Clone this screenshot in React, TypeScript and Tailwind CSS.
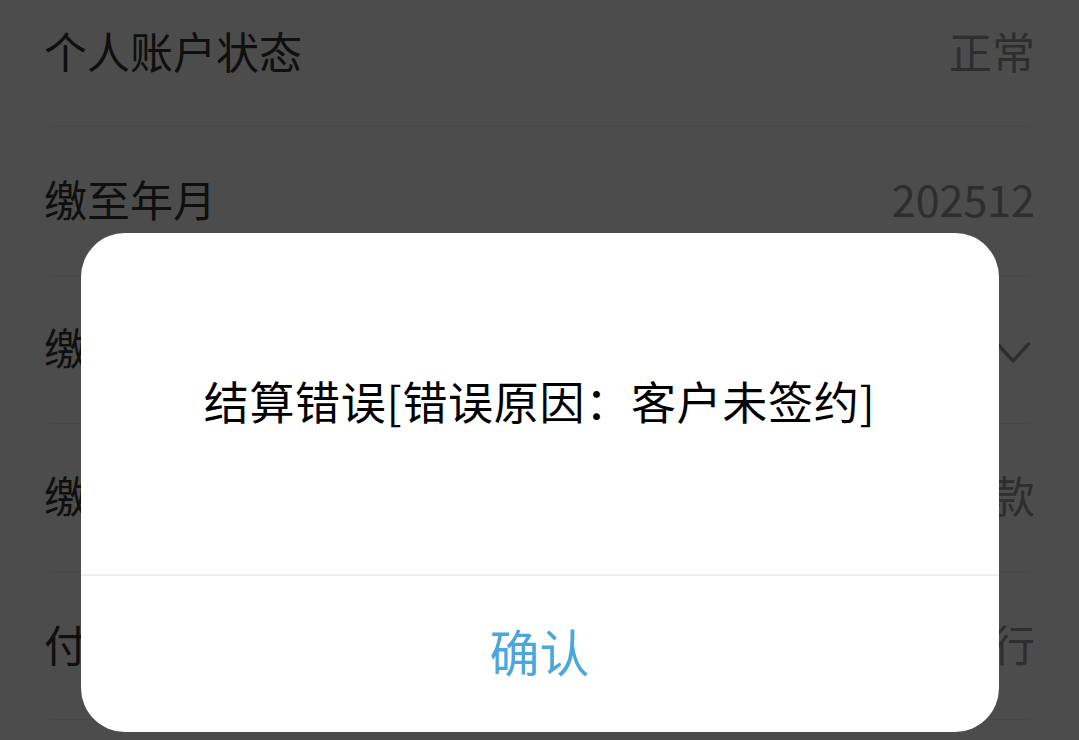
import React from "react";

const font = { fontFamily: '"Noto Sans CJK SC", "Noto Sans", sans-serif' };

type Row = { label: string; value?: string; chevron?: boolean };

const rows: Row[] = [
  { label: "个人账户状态", value: "正常" },
  { label: "缴至年月", value: "202512" },
  { label: "缴费档次", chevron: true },
  { label: "缴费方式", value: "银行代扣款" },
  { label: "付款银行", value: "中国工商银行" },
];

export default function App() {
  return (
    <div className="relative h-[740px] w-[1079px] overflow-hidden bg-white" style={font}>
      <div className="mt-[-21px] flex flex-col">
        {rows.map((r, i) => (
          <div key={i} className="flex h-[148.25px] flex-col">
            <div className="flex flex-1 items-center justify-between pb-[5px] pl-[44px] pr-[44px]">
              <span className="text-[43px] leading-none text-[#333333]">{r.label}</span>
              {r.chevron ? (
                <svg width="38" height="26" viewBox="0 0 38 26" className="mr-[2px] mt-[14px]">
                  <path d="M2.5 3 L18 20 L33.5 3" fill="none" stroke="#999999" strokeWidth="3.4" strokeLinecap="round" strokeLinejoin="round" />
                </svg>
              ) : (
                <span className="text-[43px] leading-none text-[#999999]">{r.value}</span>
              )}
            </div>
            <div className="mx-[50px] h-px bg-[#eeeeee]" />
          </div>
        ))}
      </div>

      <div className="absolute inset-0 flex justify-center bg-black/70 pt-[233px]">
        <div className="flex h-[499px] w-[918px] flex-col overflow-hidden rounded-[44px] bg-white">
          <div className="flex h-[341px] items-center justify-center pb-[6px]">
            <span className="text-[45px] leading-none tracking-[0.7px] text-black">结算错误[错误原因：客户未签约]</span>
          </div>
          <div className="h-[2px] bg-[#eeeeee]" />
          <div className="flex flex-1 items-center justify-center pb-[9px]">
            <span className="text-[50px] leading-none text-[#4ba7dd]">确认</span>
          </div>
        </div>
      </div>
    </div>
  );
}
